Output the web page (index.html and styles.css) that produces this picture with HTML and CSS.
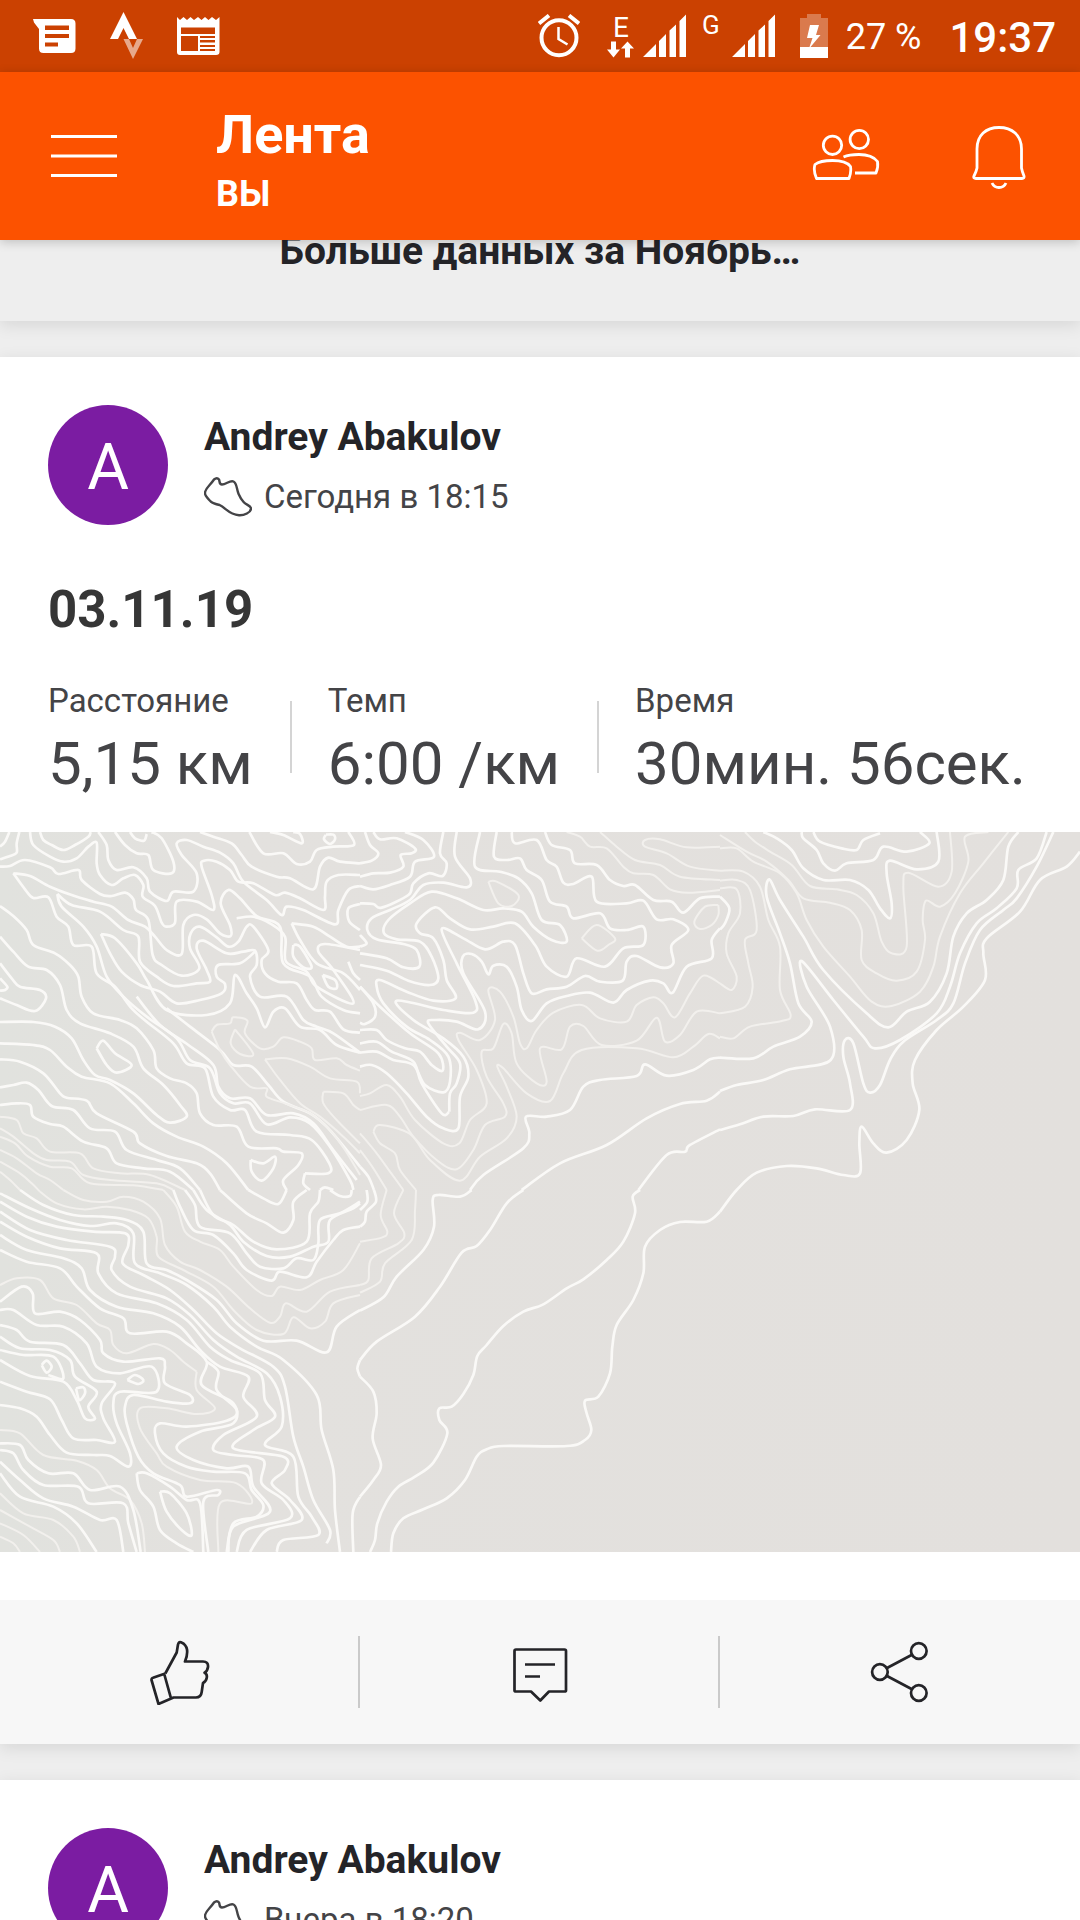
FILE: index.html
```html
<!DOCTYPE html>
<html lang="ru">
<head>
    <meta charset="UTF-8">
    <meta name="viewport" content="width=device-width, initial-scale=1">
    <title>Лента</title>
    <link rel="stylesheet" href="styles.css">
</head>
<body>
    <div class="status-bar">
        <div class="status-left">
            <svg width="44" height="36" viewBox="33 18 44 36" fill="#fff">
                <path fill-rule="evenodd" d="M33 19H71Q75.500 19 75.500 23.500V48.500Q75.500 53 71 53H43.500Q39 53 39 48.500V29L34 22.500ZM45 25.500V30H69V25.500ZM45 34V38H69V34ZM45 42.500V46.500H58V42.500Z"/>
            </svg>
            <svg width="34" height="48" viewBox="109 13 34 48" fill="#fff">
                <path d="M122.500 13L136 40H128L122.500 29L117 40H109Z"/>
                <path opacity=".55" d="M122.500 40H128L132 49L136 40H142L132 60Z"/>
            </svg>
            <svg width="44" height="40" viewBox="177 16 44 40">
                <path fill="#fff" d="M177 17L180 20L183.500 17L187 20L190.500 17L194 20L198 17L201.500 20L205 17L208.500 20L212 17L216 20L219.500 17V52Q219.500 55 216 55H180Q177 55 177 52Z"/>
                <path fill="#cb4101" d="M181 27.500H215V34H181ZM181 36H198V51H181ZM200 36H215V38H200ZM200 40H215V42H200ZM200 45H215V47H200ZM200 49H215V51H200Z"/>
                <path fill="#cb4101" opacity=".5" d="M200 42H215V43H200Z"/>
            </svg>
        </div>
        <div class="status-right">
            <svg class="alarm" width="42" height="44" viewBox="537 15 42 44" fill="none" stroke="#fff" stroke-width="4">
                <circle cx="558" cy="38.700" r="17.500"/>
                <path stroke-width="2.500" d="M557.500 28V40L566.500 45.500"/>
                <path d="M538 24.500L548 16.500M568 16.500L578 24.500"/>
            </svg>
            <div class="network">
                <span>E</span>
                <svg width="28" height="17" viewBox="608 39.500 28 17" fill="#fff">
                    <path d="M612 40H617V48H621L614.500 56L608 48H612ZM628.500 40L635 47H631V56H626V47H622Z"/>
                </svg>
            </div>
            <svg class="signal" width="44" height="44" viewBox="642 13 44 44" fill="#fff">
                <path d="M642 56L655 43V56ZM658 40L665 33V56H658ZM668.500 29.500L675 23.500V56H668.500ZM678.500 20L685 13.500V56H678.500Z"/>
            </svg>
            <span class="network-g">G</span>
            <svg class="signal" width="44" height="44" viewBox="642 13 44 44" fill="#fff">
                <path d="M642 56L655 43V56ZM658 40L665 33V56H658ZM668.500 29.500L675 23.500V56H668.500ZM678.500 20L685 13.500V56H678.500Z"/>
            </svg>
            <svg class="battery" width="28" height="44" viewBox="800 14 28 44">
                <path fill="#fff" opacity=".3" d="M807 14H821V18H828V47H800V18H807Z"/>
                <path fill="#fff" d="M800 47H828V58H800ZM810 25H819L816 35H820.500L810.500 47H809.500L812.500 38H807Z"/>
            </svg>
            <span class="percent">27 %</span>
            <span class="clock">19:37</span>
        </div>
    </div>

    <header class="app-bar">
        <button class="menu-button" aria-label="Меню">
            <svg width="66" height="42" viewBox="0 0 66 42" stroke="#fff" stroke-width="3">
                <path d="M0 1.500H66M0 21H66M0 40.500H66"/>
            </svg>
        </button>
        <div class="titles">
            <h1>Лента</h1>
            <p>ВЫ</p>
        </div>
        <button class="bar-button" aria-label="Друзья">
            <svg width="68" height="64" viewBox="812 125 68 64" fill="none" stroke="#fff" stroke-width="2.800" stroke-linejoin="round">
                <circle cx="832.500" cy="145.300" r="9.200"/>
                <circle cx="859.300" cy="139.500" r="9.200"/>
                <path d="M816.500 178.500Q813 170 815 164.500Q820 160.500 832.500 160.500Q846 160.500 850.500 166.500Q851.500 172 849 178.500Z"/>
                <path d="M843.500 157Q849 154.500 859 154.500Q872 154.500 877.500 161.500Q878.500 167 876 173H855"/>
            </svg>
        </button>
        <button class="bar-button" aria-label="Уведомления">
            <svg width="56" height="64" viewBox="971 125 56 64" fill="none" stroke="#fff" stroke-width="2.800" stroke-linejoin="round">
                <path d="M977 149C977 135 986 127.500 999 127.500S1021.500 135 1021.500 149V168Q1022 171 1024 176Q1024.500 178.500 1022 178.500H976Q973 178.500 974 176Q976.500 171 977 168Z"/>
                <path d="M992 183Q994 187.500 999 187.500T1006 183"/>
            </svg>
        </button>
    </header>

    <main>
        <section class="more">
            <a href="#">Больше данных за Ноябрь…</a>
        </section>

        <article class="card">
            <div class="author">
                <div class="avatar">A</div>
                <div>
                    <h2>Andrey Abakulov</h2>
                    <p class="date">
                        <svg width="48" height="40" viewBox="204 476 48 40" fill="none" stroke="#444447" stroke-width="2.400" stroke-linejoin="round">
                            <path d="M214 478.500Q217 476 219 478.500C220 481 219 483.500 222 483.500C226 483.500 230 479 233.500 480.500C237 482 236.500 488 238.600 493Q240.500 497.500 243.600 501C246 504 251 504.500 251 507.500C251 511.500 244 514.500 239 514.200C229 513.500 226 507 219.600 504Q213 502.500 210.700 500.500C207 497 204.500 494 205 491.500C205.500 487 210 484.500 214 478.500Z"/>
                        </svg>
                        <span>Сегодня в 18:15</span>
                    </p>
                </div>
            </div>
            <h3>03.11.19</h3>
            <dl class="stats">
                <div><dt>Расстояние</dt><dd>5,15 км</dd></div>
                <div><dt>Темп</dt><dd>6:00 /км</dd></div>
                <div><dt>Время</dt><dd>30мин. 56сек.</dd></div>
            </dl>

            <svg class="map" viewBox="0 0 1080 720">
                <defs>
                    <linearGradient id="land">
                        <stop offset="0" stop-color="#e1e2de"/>
                        <stop offset=".2" stop-color="#e3e1de"/>
                        <stop offset="1" stop-color="#e3e0dd"/>
                    </linearGradient>
                </defs>
                <rect width="1080" height="720" fill="url(#land)"/>

                <!-- north west -->
                <g class="contours" transform="translate(0 -2) scale(.33333)">
                    <polyline points="0,50 15,35 28,6"/>
                    <polyline points="0,88 30,78 50,68 50,40 58,6"/>
                    <polyline points="90,6 100,45 150,80 190,95 230,85 265,50 290,38 290,100 300,135 335,165 370,145 405,135 430,165 428,200 465,228 485,278 500,290 525,278 530,215 590,215 640,240 635,195 605,110 612,92 650,95 690,120 715,155 760,160 825,195 855,188 900,205 970,240 975,200 980,155 1015,135 1080,135"/>
                    <polyline points="120,6 130,30 155,45 190,60 225,45 265,20 272,6"/>
                    <polyline points="295,6 320,45 325,90 350,120 400,112 440,145 450,185 500,213 520,185 580,185 590,130 545,75 530,40 560,30 610,50 660,68 700,100 730,155 800,210 845,255 860,230 910,240 1005,283 1015,240 1045,180 1080,168"/>
                    <polyline points="345,6 375,45 410,70 445,75 460,120 515,130 520,95 485,25 455,6"/>
                    <polyline points="390,6 405,25 432,32 440,12"/>
                    <polyline points="600,6 640,20 695,40 725,75 755,110 830,140 870,145 940,178 960,110 985,83 1020,95 1080,100"/>
                    <polyline points="748,6 790,70 850,70 890,102 930,95 950,60 1000,50 1062,45 1045,6"/>
                    <polyline points="810,6 850,15 905,40 900,12 880,6"/>
                    <polyline points="978,14 1000,14 1005,28 990,42 972,28 978,14"/>
                    <polyline points="0,110 30,108 75,90 150,112 175,132 235,120 245,150 300,192 335,198 375,188 400,208 408,240 445,270 458,375 485,405 545,437 598,415 570,355 572,310 600,290 650,322 685,350 715,335 740,290 760,290 805,360 785,390 795,430 835,455 890,460 920,510 945,540 990,545 1030,598 1080,608"/>
                    <polyline points="40,130 75,178 100,204 145,202 170,260 205,290 220,345 275,350 290,430 345,470 395,535 440,575 520,640 560,700 615,715 640,800 690,840 735,840 770,905 870,915 935,930 988,1000 985,1030 915,1030"/>
                    <polyline points="40,130 90,138 150,170 215,195 280,215 335,230 385,270 435,290 465,320 500,360 545,372 550,285 580,255 620,268 660,310 692,318 690,285 662,220 685,180 720,205 770,258 840,290 850,400 930,440 965,500 1030,540 1080,550"/>
                    <polyline points="172,192 185,230 250,290 290,350 320,440 370,500 440,560 530,625 570,690 630,715 660,790 700,820 750,820 800,883 870,862 930,880 990,950 1050,1050 1060,1080"/>
                    <polyline points="172,192 215,225 300,245 370,300 415,320 420,395 470,440 520,468 590,460 630,455 620,420 590,355 610,332 680,370 730,365 765,362 770,405 750,440 780,500 860,500 910,570 950,590 1000,610 1080,668"/>
                    <polyline points="303,312 330,370 365,425 420,465 480,485 530,520 600,510 665,490 675,462 650,440 655,405 720,400 765,365"/>
                    <polyline points="303,312 345,325 410,400 440,450 500,540 620,555 690,520 705,435 740,490 770,535 795,592 820,545 855,535 900,590 960,600 1010,645 1080,668"/>
                    <polyline points="500,535 570,590 660,660 700,705 755,710 805,765 850,815 930,850 980,890 1040,960 1080,1010"/>
                    <polyline points="410,500 480,585 565,645 640,705 655,770 690,805 750,805 800,855 880,850 940,880 1000,960 1070,1050"/>
                    <polyline class="thin" points="635,605 650,585 690,580 700,562 742,572 735,610 780,655 820,650 850,622 900,635 935,655 945,690 1010,685 1040,705 1080,722"/>
                    <polyline class="thin" points="635,605 660,660 690,705 750,770 800,775 800,800 860,822 930,850 990,900 1035,960 1080,1035"/>
                    <polyline class="thin" points="705,598 760,672 720,672 692,640 705,598"/>
                    <polyline class="thin" points="795,688 860,685 930,710 990,745 1070,755 1080,790"/>
                    <polyline class="thin" points="795,688 840,750 900,820 960,860 1030,920 1080,970"/>
                    <polyline class="thin" points="970,785 1030,790 1060,825 1080,840"/>
                    <polyline class="thin" points="970,785 970,820 1010,870 1080,940"/>
                    <polyline points="1080,222 1045,235 1048,275 1080,300"/>
                    <polyline points="710,265 760,260 810,280 855,320 858,395 920,425 950,470 1060,520 1000,420 955,365 975,342 1080,360"/>
                    <polyline points="875,280 900,330 950,400 1030,430 1080,480"/>
                    <polyline points="875,280 940,290 990,320 1040,350 1080,350"/>
                    <polyline points="880,345 900,350 935,410 910,412 880,380 880,345"/>
                    <polyline points="968,435 1005,450 1010,475 985,470 968,435"/>
                    <polyline points="1045,395 1060,430 1080,450"/>
                    <polyline points="0,228 40,258 80,300 100,345 165,370 210,405 235,440 245,500 280,550 360,570 410,595 460,660 470,715 510,745 560,760 590,790 600,850 640,885 710,890 745,950 830,955 850,965 905,970 895,1005 850,1050 860,1080"/>
                    <polyline points="0,320 40,365 85,410 140,420 180,465 200,540 240,580 330,610 400,650 430,715 490,765 540,825 560,860 510,878 470,855 400,790 330,750 285,735 250,690 215,625 165,590 100,576 0,576"/>
                    <polyline points="0,400 35,445 60,470 120,480 138,505 105,543 50,525 0,505"/>
                    <polyline points="0,445 22,470 15,480 0,482"/>
                    <polyline points="0,640 100,645 150,660 200,710 245,740 330,760 400,820 460,880 530,920 610,950 680,1000 745,1080"/>
                    <polyline points="0,688 60,695 130,730 180,790 200,803 260,812 290,850 400,905 420,940 500,978 590,1000 630,1030 660,1080"/>
                    <polyline points="290,655 310,632 345,670 395,705 350,728 320,705 290,655"/>
                    <polyline points="0,772 40,765 80,758 115,780 155,828 220,840 270,895 345,905 380,960 470,990 540,1015 600,1080"/>
                    <polyline points="0,825 50,820 90,825 100,860 150,882 190,890 250,935 320,955 350,1000 430,1015 510,1025 580,1080"/>
                    <polyline class="thin" points="0,860 50,870 70,910 110,925 150,965 240,970 280,1015 360,1030 450,1035 555,1080"/>
                    <polyline class="thin" points="0,895 40,920 100,970 140,990 210,995 250,1035 330,1050 470,1060 520,1080"/>
                    <polyline class="thin" points="0,920 45,940 85,980 150,1010 215,1015 270,1060 400,1066 490,1080"/>
                    <polyline class="thin" points="0,960 50,985 110,1030 150,1050 190,1080"/>
                    <polyline class="thin" points="0,995 60,1030 95,1060 120,1085"/>
                    <polyline class="thin" points="0,1025 30,1050 60,1080"/>
                    <polyline points="752,990 790,1000 825,980 820,1015 785,1052 755,1025 752,990"/>
                    <polyline points="915,1030 910,1060 930,1080"/>
                    <polyline points="960,1080 975,1072 1000,1080"/>
                </g>

                <!-- north -->
                <g class="contours" transform="translate(360 -2) scale(.33333)">
                    <polyline points="15,6 30,45 55,70 35,92 0,100"/>
                    <polyline points="40,6 60,28 110,25 165,55 155,70 122,75 130,110 90,128 40,130 0,140"/>
                    <polyline points="135,6 190,30 222,80 165,95 150,140 90,165 40,178 0,168"/>
                    <polyline points="250,6 240,70 260,100 248,138 205,130 160,160 145,195 65,233 40,222 0,220"/>
                    <polyline points="290,6 285,80 330,145 320,172 250,158 190,165 150,210 90,240 35,265 22,300 50,328 130,342 170,360 178,410 130,412 80,385 0,370"/>
                    <polyline points="360,6 345,110 420,125 475,145 515,190 545,270 600,285 620,335 575,330 520,290 485,245 430,235 370,240 290,205 215,185 150,220 85,270 72,310 110,328 180,335 215,380 235,445 210,465 145,452 80,422 0,405"/>
                    <polyline points="410,6 402,80 440,90 480,85 500,120 545,150 570,215 620,230 640,265 720,250 750,295 800,300 850,290 850,345 790,355 735,410 650,385 620,440 560,410 525,345 465,280 400,290 330,298 270,265 225,232 170,280 180,310 220,325 250,390 260,450 287,505 220,512 140,485 60,450 50,470 70,520 140,590 210,630 265,680 270,755 250,787 195,765 160,705 100,690 50,665 0,668"/>
                    <polyline points="455,6 465,40 530,30 560,90 590,110 610,158 640,162 695,140 710,215 800,220 850,212 890,268 940,268 985,300 935,345 940,400 900,412 830,378 800,395 788,452 720,455 675,438 620,470 560,478 515,490 490,430 465,345 430,335 375,358 310,325 245,297 290,400 345,510 340,548 250,540 110,512 160,570 250,625 310,680 325,740 300,800 295,895 250,895 200,860 140,790 80,730 35,705 0,710"/>
                    <polyline points="555,6 575,45 630,60 645,100 710,105 750,150 790,168 825,165 880,210 935,215 970,248 1020,205 1080,200"/>
                    <polyline points="0,640 50,635 95,665 160,695 185,760 245,850 268,845"/>
                    <polyline points="0,600 50,600 80,630 135,655 180,665 215,705 248,722 235,670 150,610 60,530 0,470"/>
                    <polyline points="0,470 40,520 45,560 15,582 0,578"/>
                    <polyline points="268,845 270,790 290,760 300,700 260,650 205,580 225,570 290,575 355,598 375,545 310,430 308,380 335,372 365,395 385,433 400,407 440,410 470,470 485,540 515,573 560,520 620,498 690,488 760,518 800,480 870,452 910,460 938,488 980,410 1055,385 1055,330 1080,295"/>
                    <polyline class="thin" points="0,798 30,790 80,765 120,800 165,870 250,940 298,940 330,870 380,820 350,720 295,630 300,608 360,630 405,570 385,480 420,485 460,560 480,640 500,655 530,600 580,548 665,525 720,565 800,575 830,525 880,502 910,520 945,562 990,490 1030,437 1080,460"/>
                    <polyline class="thin" points="0,840 80,825 120,860 160,920 230,990 290,1018 340,960 375,885 435,860 430,820 380,740 365,665 400,655 430,582 455,610 470,700 530,760 560,755 540,655 605,658 630,590 670,588 725,645 830,632 890,563 915,635 960,615 1010,545 1080,550"/>
                    <polyline class="thin" points="40,905 60,885 150,912 210,990 300,1052 360,980 440,925 470,860 440,770 412,710 430,715 500,790 570,813 610,730 665,660 830,655 940,682 1000,650 1045,612 1080,625"/>
                    <polyline class="thin" points="40,905 60,940 105,970 120,1020 168,1080"/>
                    <polyline points="330,1080 370,1035 490,955 508,910 498,860 560,860 630,840 670,770 720,750 830,738 855,703 920,737 1000,720 1050,688 1080,683"/>
                    <polyline points="485,1080 600,1000 740,945 860,865 960,822 1040,812 1080,785"/>
                    <polyline points="835,1080 920,975 975,965 990,945 1080,898"/>
                    <polyline class="thin" points="620,6 660,20 690,50 740,55 790,110 820,130 880,135 930,178 985,188 1080,180"/>
                    <polyline class="thin" points="720,6 770,50 825,90 900,105 960,140 1080,150"/>
                    <polyline class="thin" points="1080,50 980,52 900,28 855,30 855,50 920,70 990,110 1080,122"/>
                    <polyline class="thin" points="385,155 410,155 475,195 455,228 415,220 385,155"/>
                    <polyline class="thin" points="665,325 710,285 765,325 745,345 712,362 665,325"/>
                    <polyline class="thin" points="1075,225 1035,230 1003,275 1020,297 1055,285 1075,255 1075,225"/>
                    <polyline class="thin" points="0,910 50,970 90,1025 130,1080"/>
                    <polyline class="thin" points="0,960 40,1015 80,1080"/>
                    <polyline points="0,1010 25,1040 42,1080"/>
                    <polyline points="0,315 20,340 0,350"/>
                </g>

                <!-- north east -->
                <g class="contours" transform="translate(720 -2) scale(.33333)">
                    <polyline points="280,6 300,35 365,55 410,60 430,30 480,10"/>
                    <polyline points="600,6 628,40 560,65 490,50 460,90 380,100 345,122 310,100 290,60 250,25 245,6"/>
                    <polyline points="650,6 655,95 590,118 510,92 500,130 515,220 510,265 480,235 445,180 390,150 310,150 250,115 215,60 170,25 130,6"/>
                    <polyline class="thin" points="690,6 695,125 655,170 565,128 550,170 560,350 515,370 485,335 460,250 410,195 350,178 270,168 215,105 150,65 105,35 75,6"/>
                    <polyline class="thin" points="805,6 735,20 745,95 705,190 660,230 618,212 608,270 615,330 590,425 530,452 470,430 425,390 425,300 390,240 330,218 250,205 205,150 140,95 80,65 0,15"/>
                    <polyline class="thin" points="865,6 790,100 720,190 660,320 640,410 600,485 515,528 455,515 390,440 310,350 260,270 230,190 180,130 100,95 50,55 0,55"/>
                    <polyline points="895,6 865,50 850,150 800,210 740,250 700,320 680,430 630,515 560,545 505,592 440,550 310,420 250,320 180,210 148,148 140,200 180,310 210,400 235,520 275,575 240,620 160,650 100,685 0,683"/>
                    <polyline points="980,6 950,85 895,120 890,175 830,235 770,280 720,370 690,470 650,550 540,630 465,655 430,620 340,510 245,393 260,470 330,590 332,690 210,718 130,750 50,765 0,783"/>
                    <polyline points="1000,6 950,110 890,205 850,240 780,300 735,400 700,520 650,570 550,635 510,690 480,765 450,788 430,760 400,640 375,630 370,680 390,760 390,840 285,838 220,858 130,860 60,883 0,900"/>
                    <polyline points="1080,65 1040,110 960,150 900,245 800,325 790,370 795,450 730,530 650,600 585,690 578,760 598,840 560,930 500,968 460,940 425,890 418,940 420,1030 370,1035 290,1015 200,1008 110,1028 50,1080 0,1145"/>
                    <polyline class="thin" points="0,122 70,125 120,170 145,270 180,350 180,480 212,555 185,573 90,590 40,625 0,620"/>
                    <polyline class="thin" points="0,152 50,150 90,180 110,300 75,330 85,400 98,470 75,530 0,550"/>
                    <polyline class="thin" points="0,175 50,178 60,250 25,310 20,370 50,440 35,480 0,460"/>
                    <polyline points="0,200 28,235 15,280 0,298"/>
                </g>

                <!-- south west -->
                <g class="contours" transform="translate(0 358) scale(.33333)">
                    <polyline class="thin" points="190,0 250,30 320,35 370,20 430,35 480,85 495,165 540,215 600,240 680,290 750,355 810,398 840,380 858,340 920,365 990,305 1080,285"/>
                    <polyline class="thin" points="120,5 170,40 250,58 320,50 390,60 445,85 470,140 475,200 550,240 640,290 700,360 770,420 850,432 880,382 930,415 975,395 1000,340 1080,315"/>
                    <polyline points="60,0 130,45 220,75 310,80 380,90 430,125 440,220 500,240 560,270 650,330 710,400 790,452 890,452 980,487 1010,410 1080,360"/>
                    <polyline points="0,10 90,55 180,90 270,108 350,100 400,130 405,220 480,250 560,285 640,350 690,410 770,470 850,510 950,615 965,720 1000,840 1005,960 1020,1086"/>
                    <polyline points="0,35 80,80 170,110 280,125 375,130 385,165 368,220 430,255 510,300 580,360 650,430 720,475 820,530 855,590 880,740 910,830 940,930 990,1020 980,1060"/>
                    <polyline points="0,65 90,120 200,150 330,170 345,200 335,240 390,290 500,325 570,375 640,450 710,500 800,550 840,620 845,710 795,765 880,800 895,920 935,980 955,1035 850,1050 830,1086"/>
                    <polyline points="0,95 80,140 180,175 290,190 295,250 350,310 470,340 560,390 630,470 690,510 780,550 795,630 825,680 760,720 700,775 850,800 855,840 815,880 870,930 905,990 800,1020 750,1086"/>
                    <polyline points="0,135 80,180 190,205 245,235 270,300 350,350 460,370 540,410 600,480 660,530 745,560 730,620 770,680 670,735 640,780 700,795 790,810 785,880 850,930 870,985 740,1020 710,1086"/>
                    <polyline points="0,180 80,215 180,235 230,290 300,355 370,385 390,430 500,425 560,460 620,515 605,585 700,640 700,700 600,725 530,770 580,810 680,835 745,830 760,890 810,965 700,1010 685,1086"/>
                    <polyline class="thin" points="590,545 590,600 645,655 590,672 500,655 420,655 420,715 470,790 500,830 600,870 710,880 755,940 660,940 655,1086"/>
                    <polyline points="620,515 655,545 650,600 710,660 680,692 560,710 480,700 465,730 490,790 560,830 640,845 735,850 755,900 790,945 770,980 700,1000 680,1086"/>
                    <polyline class="thin" points="0,285 50,265 120,270 160,325 230,345 290,400 330,420 340,465 380,490 460,462 510,480 550,515 590,545"/>
                    <polyline points="0,335 65,290 98,310 105,370 180,365 240,390 300,450 310,490 370,515 480,505 495,530 495,580 570,615 570,640 500,635 400,615 375,650 380,700 415,800 460,850 540,885 560,920 650,900 655,915 610,935 625,1086"/>
                    <polyline points="0,360 40,360 110,405 190,410 260,460 290,530 360,550 455,530 470,605 360,605 340,640 350,700 390,790 385,830 330,798 280,795 200,788 150,735 110,680 60,655 0,645"/>
                    <polyline points="0,405 50,420 90,455 190,465 240,520 280,570 345,580 305,640 310,685 345,755 290,750 220,745 185,690 150,628 80,605 0,575"/>
                    <polyline points="0,440 60,475 150,480 210,510 225,560 290,605 265,650 285,685 255,685 230,630 190,575 90,558 0,510"/>
                    <polyline points="0,480 70,495 160,500 190,565 145,555"/>
                    <polyline points="125,525 140,512 155,530 140,548 125,525"/>
                    <polyline points="228,595 250,592 255,610 238,630 228,595"/>
                    <polyline points="382,570 405,555 430,570 415,582 382,570"/>
                    <polyline class="thin" points="0,720 60,730 130,795 230,812 290,840 330,895 390,930 425,1000 435,1086"/>
                    <polyline points="0,760 60,765 85,810 145,850 220,850 270,900 360,890 400,960 422,1086"/>
                    <polyline points="0,780 40,790 70,840 130,885 235,890 265,940 370,940 385,1000 410,1086"/>
                    <polyline points="0,815 60,870 130,925 220,950 300,990 350,990 370,1086"/>
                    <polyline points="0,850 60,920 160,950 230,1000 290,1086"/>
                    <polyline class="thin" points="0,910 70,970 160,990 220,1040 240,1086"/>
                    <polyline class="thin" points="0,960 90,1010 160,1050 180,1086"/>
                    <polyline class="thin" points="0,1000 70,1035 120,1086"/>
                    <polyline class="thin" points="0,1040 40,1060 60,1086"/>
                    <polyline points="410,850 440,850 510,890 560,930 600,940 610,1086"/>
                    <polyline points="410,850 420,900 460,950 480,1020 530,1060 580,1086"/>
                    <polyline points="480,905 510,910 560,970 575,1035 545,1020 500,965 480,905"/>
                    <polyline class="thin" points="490,0 530,50 555,125 600,155 660,180 700,230 770,300 815,318 840,290 900,300 960,270 1030,240 1080,160"/>
                    <polyline points="520,0 540,50 580,120 640,135 700,190 740,240 815,272 840,245 920,262 950,215 1000,150 1030,120 1080,110"/>
                    <polyline points="555,0 585,45 600,110 690,130 740,190 780,230 850,235 890,205 940,210 955,160 960,90 1020,70 1080,35"/>
                    <polyline points="580,0 620,60 690,105 730,155 800,198 870,200 940,170 985,155 990,90 1060,55 1080,40"/>
                    <polyline points="600,0 640,75 700,105 760,155 830,178 920,155 930,70 955,35 960,0"/>
                    <polyline points="660,0 740,70 800,100 850,128 880,90 880,35 920,0"/>
                    <polyline points="745,0 790,25 835,42 860,0"/>
                    <polyline points="990,0 1020,18 1050,18 1055,0"/>
                    <polyline points="1080,920 1058,970 1060,1086"/>
                    <polyline points="1080,510 1072,535 1080,560"/>
                </g>

                <!-- south -->
                <g class="contours" transform="translate(360 358) scale(.33333)">
                    <polyline points="20,0 22,35 0,60"/>
                    <polyline points="42,0 48,35 20,65 15,95 0,110"/>
                    <polyline class="thin" points="80,0 62,75 82,125 65,143 0,155"/>
                    <polyline class="thin" points="130,0 102,70 133,130 115,160 35,205 25,270 0,285"/>
                    <polyline class="thin" points="168,0 165,60 155,150 75,220 60,275 0,308"/>
                    <polyline points="335,0 300,20 235,15 218,30 222,110 190,180 110,260 70,322 0,362"/>
                    <polyline points="490,0 440,40 390,120 350,168 305,188 240,290 165,380 50,455 0,510"/>
                    <polyline points="0,560 40,605 50,670 38,745 63,825 40,870 0,920"/>
                    <polyline points="840,0 818,20 825,70 790,155 740,210 670,268 620,295 550,343 490,365 430,408 380,465 352,498 340,555 310,612 275,650 238,655 238,690 262,730 220,818 165,860 115,890 80,935 52,1000 45,1050 30,1086"/>
                    <polyline points="1080,65 1040,95 960,96 900,120 855,170 850,250 820,330 770,405 757,470 750,550 715,620 675,632 680,670 694,720 675,750 620,768 430,768 380,778 350,800 315,870 260,925 190,958 130,985 100,1030 93,1086"/>
                </g>
            </svg>

            <div class="actions">
                <button aria-label="Нравится">
                    <svg width="60" height="66" viewBox="149 1639 60 66">
                        <path d="M164.300 1673.500L175.700 1652.500L177 1644.500Q178 1641 180.500 1642.500Q185 1644.500 186 1649.500Q186.800 1655 184 1661.500H202Q207.500 1661.500 207 1667Q206.500 1671 203.600 1672.700Q206.500 1674 205.700 1678Q205 1681.500 202 1683L200.700 1692Q200 1697.500 195 1697.500H172.500L157.500 1704L150.500 1680Q150.500 1678 152 1677.700L164.300 1673.500M163.500 1675L170 1698.300"/>
                    </svg>
                </button>
                <button aria-label="Комментировать">
                    <svg width="60" height="66" viewBox="509 1639 60 66">
                        <path d="M515 1649.500H563.500Q565 1649.500 565 1651V1690.500Q565 1691.500 563.500 1691.500H548L539.300 1700.500L530 1691.500H515Q513.500 1691.500 513.500 1690.500V1651Q513.500 1649.500 515 1649.500ZM524 1664.500H554M524 1676.500H539"/>
                    </svg>
                </button>
                <button aria-label="Поделиться">
                    <svg width="60" height="66" viewBox="869 1639 60 66">
                        <circle cx="917.800" cy="1651" r="7.800"/>
                        <circle cx="878.900" cy="1672" r="7.800"/>
                        <circle cx="917.800" cy="1693" r="7.800"/>
                        <path d="M886 1668L911 1654.800M886 1676L911 1689.200"/>
                    </svg>
                </button>
            </div>
        </article>

        <article class="card">
            <div class="author">
                <div class="avatar">A</div>
                <div>
                    <h2>Andrey Abakulov</h2>
                    <p class="date">
                        <svg width="48" height="40" viewBox="204 476 48 40" fill="none" stroke="#444447" stroke-width="2.400" stroke-linejoin="round">
                            <path d="M214 478.500Q217 476 219 478.500C220 481 219 483.500 222 483.500C226 483.500 230 479 233.500 480.500C237 482 236.500 488 238.600 493Q240.500 497.500 243.600 501C246 504 251 504.500 251 507.500C251 511.500 244 514.500 239 514.200C229 513.500 226 507 219.600 504Q213 502.500 210.700 500.500C207 497 204.500 494 205 491.500C205.500 487 210 484.500 214 478.500Z"/>
                        </svg>
                        <span>Вчера в 18:20</span>
                    </p>
                </div>
            </div>
        </article>
    </main>
    <script src="contours.js"></script>
</body>
</html>
```
FILE: styles.css
```css
* {
    box-sizing: border-box;
}

body {
    margin: 0;
    height: 100vh;
    overflow: hidden;
    display: flex;
    flex-direction: column;
    font-family: Roboto, sans-serif;
    background: #eeeeee;
    color: #444447;
}

h1, h2, h3, p, dl, dd {
    margin: 0;
}

svg {
    display: block;
    flex: none;
}

button {
    padding: 0;
    border: none;
    background: none;
    cursor: pointer;
}

/* Status bar */
.status-bar {
    flex: none;
    display: flex;
    justify-content: space-between;
    height: 72px;
    padding: 0 24px 0 33px;
    background: #cb4101;
    color: #fff;
}

.status-left,
.status-right {
    display: flex;
    align-items: center;
}

.status-left {
    gap: 33px;
}

.network {
    display: flex;
    flex-direction: column;
    align-items: center;
    margin: 0 8px 0 27px;
    font-size: 28px;
    line-height: 26px;
}

.network-g {
    margin: 0 12px 22px 15px;
    font-size: 26px;
    line-height: 26px;
}

.battery {
    margin: 0 18px 0 24px;
}

.percent {
    font-size: 36px;
    padding-top: 2px;
}

.clock {
    margin-left: 28px;
    padding-top: 2px;
    font-size: 42px;
    font-weight: 500;
}

/* App bar */
.app-bar {
    flex: none;
    display: flex;
    align-items: center;
    height: 168px;
    padding: 0 53px 0 51px;
    background: #fc5200;
    color: #fff;
    z-index: 1;
    box-shadow: 0 2px 10px rgba(0, 0, 0, 0.2);
}

.titles {
    flex: 1;
    margin-left: 99px;
    padding-top: 12px;
}

.titles h1 {
    font-size: 54px;
    line-height: 64px;
}

.titles p {
    font-size: 36px;
    line-height: 54px;
    font-weight: 700;
}

.bar-button {
    margin-left: 91px;
    padding-top: 2px;
}

main {
    flex: 1;
    min-height: 0;
}

.more {
    height: 81px;
    text-align: center;
    font-size: 39px;
    line-height: 46px;
    font-weight: 700;
    overflow: hidden;
}

.more a {
    display: block;
    margin-top: -12px;
    color: #242428;
    text-decoration: none;
}

/* Activity card */
.card {
    margin-top: 36px;
    background: #fff;
}

.more,
.card {
    box-shadow: 0 4px 16px rgba(0, 0, 0, 0.1);
}

.author {
    display: flex;
    gap: 36px;
    padding: 48px 48px 0;
}

.avatar {
    display: flex;
    justify-content: center;
    align-items: center;
    width: 120px;
    height: 120px;
    padding-top: 4px;
    border-radius: 50%;
    background: #7b1ca2;
    color: #fff;
    font-size: 64px;
}

.author h2 {
    margin-top: 9px;
    font-size: 39px;
    line-height: 46px;
    color: #242428;
}

.date {
    display: flex;
    align-items: center;
    gap: 12px;
    margin-top: 16px;
    font-size: 33px;
    line-height: 42px;
}

.card h3 {
    padding: 55px 48px 0;
    font-size: 51px;
    line-height: 60px;
    color: #363636;
}

.stats {
    display: flex;
    padding: 41px 48px 32px;
    white-space: nowrap;
}

.stats div + div {
    margin-left: 37px;
    padding-left: 38px;
    background: linear-gradient(#d4d4d4, #d4d4d4) left 20px / 2px 72px no-repeat;
}

.stats dt {
    font-size: 33px;
    line-height: 39px;
}

.stats dd {
    font-size: 60px;
    line-height: 72px;
    margin-top: 8px;
}

.map {
    width: 100%;
    height: auto;
}

.contours {
    fill: none;
    stroke: #faf9f7;
    stroke-width: 8;
    stroke-linejoin: round;
}

.contours .thin {
    stroke: #f2f0ed;
    stroke-width: 6;
}

/* Like, comment, share */
.actions {
    display: grid;
    grid-template-columns: repeat(3, 1fr);
    margin-top: 48px;
    background: #f7f7f7;
}

.actions button {
    display: flex;
    justify-content: center;
    align-items: center;
    height: 144px;
}

.actions button:not(:last-child) {
    background: linear-gradient(#cacaca, #cacaca) right center / 2px 72px no-repeat;
}

.actions svg {
    fill: none;
    stroke: #242428;
    stroke-width: 2.7;
    stroke-linejoin: round;
}
```
FILE: contours.js
```js
// Turn every contour polyline into a smooth curve through the same points
document.querySelectorAll(".contours polyline").forEach(function (line) {
    let pts = Array.from(line.points);
    let d = "M" + pts[0].x + " " + pts[0].y;
    for (let i = 0; i < pts.length - 1; i++) {
        let p0 = pts[i - 1] || pts[i];
        let p1 = pts[i];
        let p2 = pts[i + 1];
        let p3 = pts[i + 2] || p2;
        d += "C" + [
            p1.x + (p2.x - p0.x) / 6, p1.y + (p2.y - p0.y) / 6,
            p2.x - (p3.x - p1.x) / 6, p2.y - (p3.y - p1.y) / 6,
            p2.x, p2.y
        ].join(" ");
    }
    let path = document.createElementNS("http://www.w3.org/2000/svg", "path");
    path.setAttribute("d", d);
    path.setAttribute("class", line.getAttribute("class") || "");
    line.replaceWith(path);
});
```
